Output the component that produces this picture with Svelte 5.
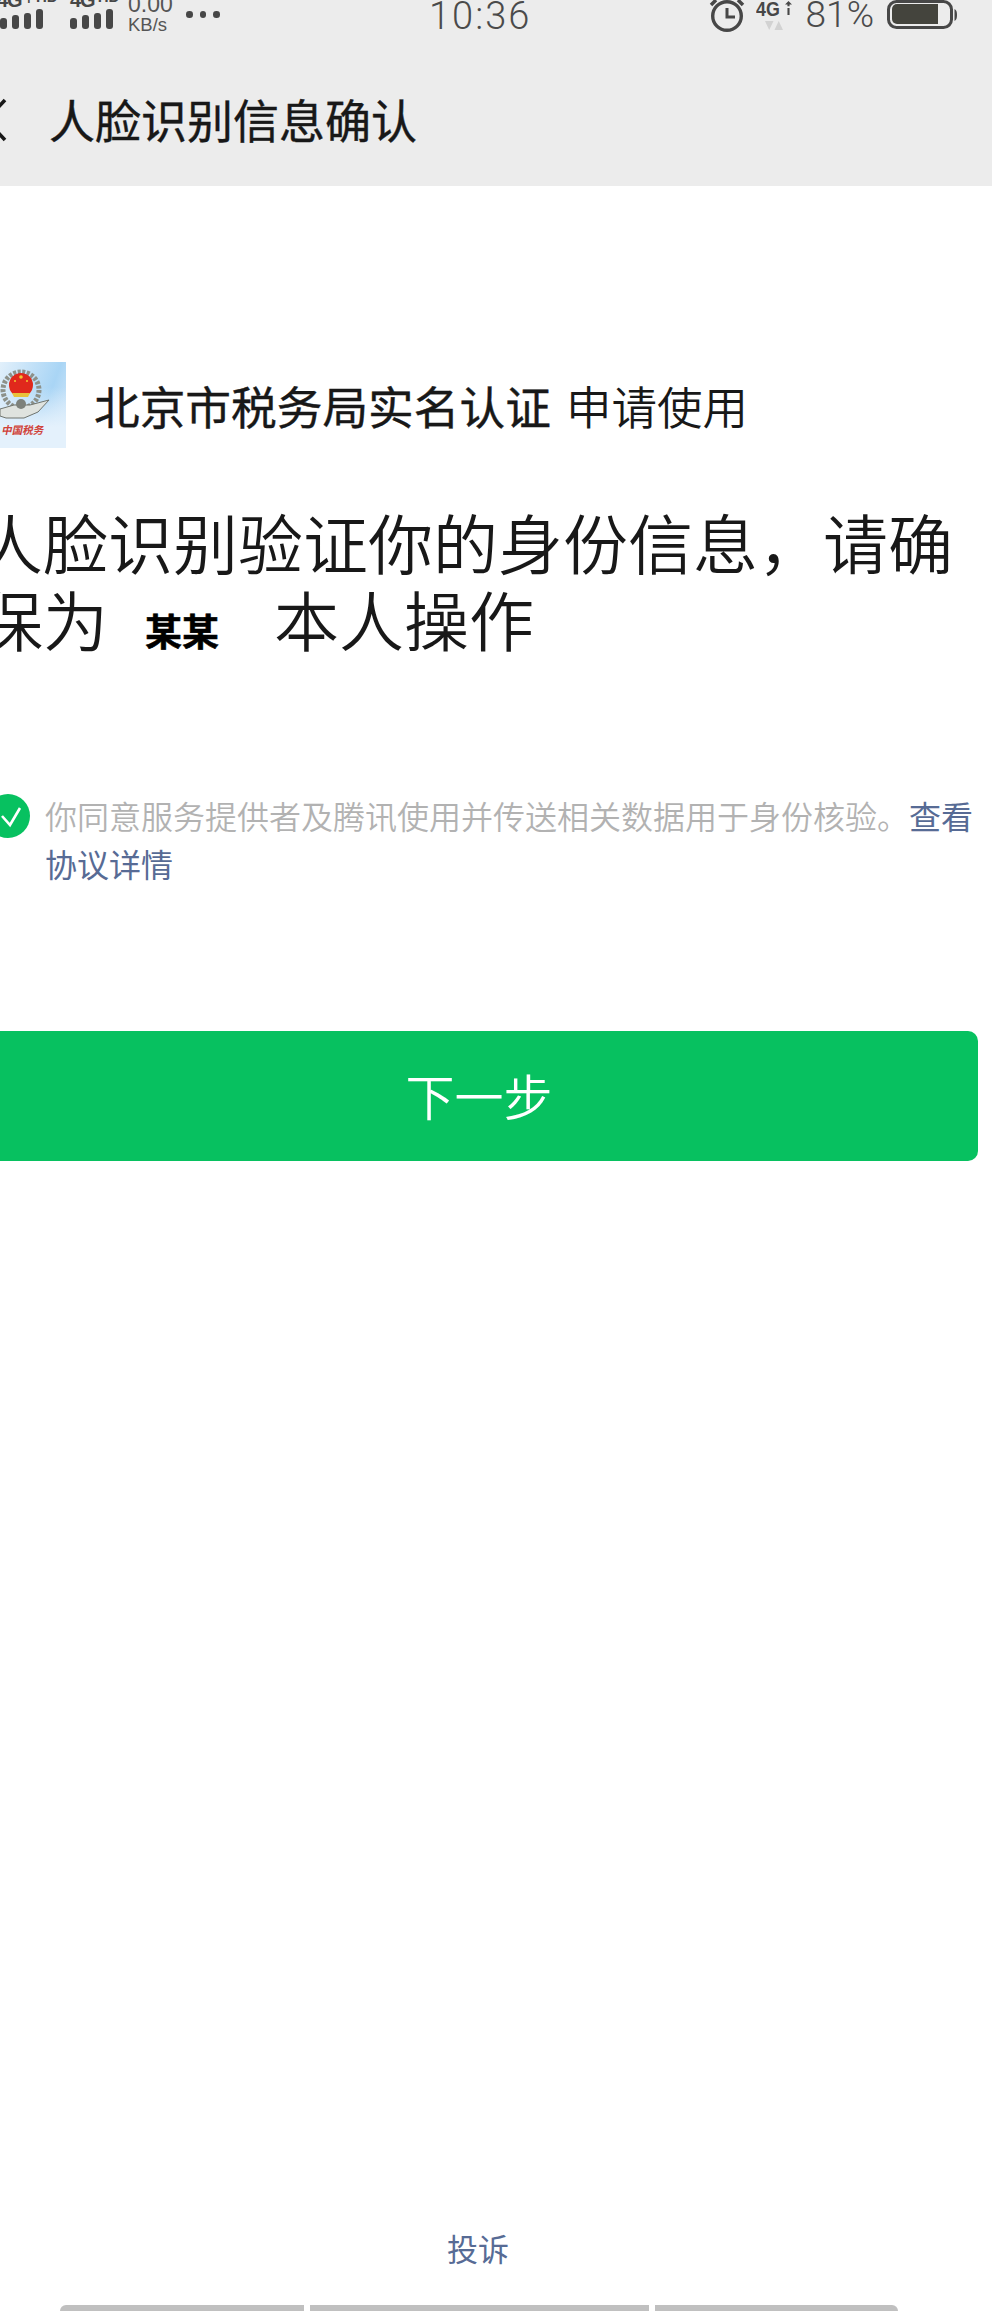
<script>
  const bars = [
    { h: 11 }, { h: 14 }, { h: 16 }, { h: 20 }
  ];
</script>

<div class="page">
  <header class="top">
    <div class="status">
      <div class="st-left">
        <div class="sig first">
          <span class="net"><span class="g">4G</span><span class="plus">+</span><span class="hd">HD</span></span>
          <div class="bars">{#each bars as b}<i style="height:{b.h}px"></i>{/each}</div>
        </div>
        <div class="sig second">
          <span class="net"><span class="g">4G</span><span class="hd">HD</span></span>
          <div class="bars">{#each bars as b}<i style="height:{b.h}px"></i>{/each}</div>
        </div>
        <div class="speed"><span class="sp-n">0.00</span><span class="sp-u">KB/s</span></div>
        <div class="more"><b></b><b></b><b></b></div>
      </div>
      <div class="time">10:36</div>
      <div class="st-right">
        <svg class="alarm" width="36" height="32" viewBox="0 0 36 32">
          <circle cx="18" cy="16" r="14.300" fill="none" stroke="#474747" stroke-width="3.4"/>
          <path d="M18 8v9h8" fill="none" stroke="#474747" stroke-width="3"/>
          <path d="M2 5 L7 0 M34 5 L29 0" stroke="#474747" stroke-width="3.500"/>
        </svg>
        <div class="net4">
          <div class="n4row">
            <span class="n4">4G</span>
            <svg width="8" height="16" viewBox="0 0 8 16"><path d="M4 0l4 4H5.200v2H2.800V4H0zM2.800 8h2.400v8H2.800z" fill="#474747"/></svg>
          </div>
          <svg class="tri" width="18" height="9" viewBox="0 0 18 9"><path d="M0 0h8.500L4.200 9zM9.500 9h8.500L13.700 0z" fill="#d2d2d2"/></svg>
        </div>
        <span class="pct">81%</span>
        <svg class="batt" width="72" height="30" viewBox="0 0 72 30">
          <rect x="1.500" y="1.500" width="63" height="26" rx="8" fill="none" stroke="#474747" stroke-width="3"/>
          <path d="M5 9a5 5 0 0 1 5-5h41v20H10a5 5 0 0 1-5-5z" fill="#44443d"/>
          <path d="M67.500 9c2 1 2.500 3 2.500 6s-.5 5-2.500 6z" fill="#474747"/>
        </svg>
      </div>
    </div>
    <div class="nav">
      <svg class="back" width="8" height="48" viewBox="0 0 8 48"><path d="M5 4 L-14 24 L5 44" fill="none" stroke="#181818" stroke-width="3.600"/></svg>
      <h1>人脸识别信息确认</h1>
    </div>
  </header>

  <main class="body">
    <div class="app">
      <div class="logo">
        <svg width="66" height="86" viewBox="0 0 66 86">
          <defs>
            <linearGradient id="bg" x1="0" y1="0" x2="1" y2="0.5">
              <stop offset="0" stop-color="#e2f0fb"/>
              <stop offset="0.75" stop-color="#a9d5f5"/>
              <stop offset="1" stop-color="#c6e2f8"/>
            </linearGradient>
            <linearGradient id="fade" x1="0" y1="0" x2="0" y2="1">
              <stop offset="0" stop-color="#e4f1fc" stop-opacity="0"/>
              <stop offset="1" stop-color="#e4f1fc"/>
            </linearGradient>
          </defs>
          <rect width="66" height="86" fill="url(#bg)"/>
          <rect y="25" width="66" height="40" fill="url(#fade)"/>
          <rect y="65" width="66" height="21" fill="#e4f1fc"/>
          <circle cx="21" cy="28" r="18" fill="none" stroke="#8d918a" stroke-width="5" stroke-dasharray="3 1.500"/>
          <circle cx="21" cy="23" r="12" fill="#e0281c"/>
          <circle cx="21" cy="15" r="1.800" fill="#f3c531"/>
          <circle cx="15" cy="19" r="1" fill="#f3c531"/><circle cx="27" cy="19" r="1" fill="#f3c531"/>
          <path d="M12 31h18l-2 4H14z" fill="#e8c13a"/>
          <path d="M0 47 L14 43 H30 L49 38 L38 50 L24 56 H6 L0 54z" fill="#dfe3df" stroke="#70756f" stroke-width="1"/>
          <circle cx="21" cy="42" r="5" fill="#7d817b"/>
        </svg>
        <span class="seal">中国税务</span>
      </div>
      <p class="name"><strong>北京市税务局实名认证</strong><span class="apply">申请使用</span></p>
    </div>

    <h2 class="head">人脸识别验证你的身份信息，请确<br/>保为<span class="who">某某</span>本人操作</h2>

    <div class="agree">
      <span class="check">
        <svg width="44" height="44" viewBox="0 0 44 44"><circle cx="22" cy="22" r="22" fill="#07c160"/><path d="M16 22l8 9 10-17" fill="none" stroke="#fff" stroke-width="2.600"/></svg>
      </span>
      <p>你同意服务提供者及腾讯使用并传送相关数据用于身份核验。<a href="#agree">查看协议详情</a></p>
    </div>

    <button class="next"><span>下一步</span></button>
  </main>

  <footer class="foot">
    <a href="#report">投诉</a>
    <div class="home"><i class="k1"></i><i class="k2"></i><i class="k3"></i></div>
  </footer>
</div>

<style>
  :global(body) { margin: 0; background: #fff; overflow: hidden; }
  .page {
    width: 992px; height: 2311px; overflow: hidden; display: flex; flex-direction: column;
    font-family: "Noto Sans CJK SC", "Liberation Sans", sans-serif; color: #181818; background: #fff;
  }
  .top { height: 186px; background: #ececec; flex: none; }
  .status { height: 40px; display: flex; justify-content: space-between; position: relative; color: #474747; overflow: hidden; }
  .st-left { display: flex; }
  .sig { width: 43px; display: flex; flex-direction: column; }
  .sig.second { margin-left: 27px; }
  .net { display: flex; height: 9px; align-items: flex-end; white-space: nowrap; font-family: "Liberation Sans", sans-serif; font-weight: 700; line-height: 1; }
  .g { font-size: 20px; letter-spacing: -1px; flex: none; margin-bottom: -1px; }
  .first .g { margin-left: -3px; }
  .hd { font-size: 15px; flex: none; margin: 0 0 5px 3px; }
  .plus { font-size: 14px; flex: none; margin: 0 0 3px 3px; }
  .bars { display: flex; align-items: flex-end; gap: 5.500px; height: 20px; }
  .bars i { width: 6.500px; background: #474747; border-radius: 3px; display: block; flex: none; }
  .speed { margin-left: 15px; width: 46px; display: flex; flex-direction: column; line-height: 1; font-family: "Liberation Sans", sans-serif; color: #555; }
  .sp-n { font-size: 23px; margin-top: -7px; height: 23px; }
  .sp-u { font-size: 18.500px; margin-top: 0; }
  .more { display: flex; gap: 7px; margin: 11px 0 0 12px; }
  .more b { width: 6.500px; height: 6.500px; border-radius: 50%; background: #474747; display: block; }
  .time { position: absolute; left: 429px; top: -4px; font: 300 38px/40px Roboto, sans-serif; letter-spacing: 2px; color: #4a4a4a; }
  .st-right { display: flex; align-items: flex-start; margin-right: 33px; }
  .alarm { overflow: visible; }
  .net4 { margin-left: 11px; width: 36px; display: flex; flex-direction: column; }
  .n4row { display: flex; height: 21px; gap: 3px; }
  .n4 { font: 700 21px/17px "Liberation Sans", sans-serif; width: 26px; transform: scaleX(.85); transform-origin: left; white-space: nowrap; }
  .tri { margin-left: 9px; display: block; }
  .pct { font: 300 37px/36px Roboto, sans-serif; margin-left: 14px; color: #4a4a4a; margin-top: -3px; }
  .batt { margin-left: 13px; }
  .nav { height: 146px; display: flex; align-items: center; padding-top: 12px; box-sizing: border-box; }
  .back { margin-top: 2px; flex: none; }
  h1 { margin: 0 0 0 41px; font-size: 46px; font-weight: 400; -webkit-text-stroke: .4px #181818; line-height: 1.2; color: #181818; }
  .body { margin-left: -22px; width: 1000px; flex: 1; }
  .app { display: flex; align-items: center; margin-top: 176px; padding-left: 22px; height: 86px; }
  .logo { position: relative; width: 66px; height: 86px; flex: none; }
  .logo svg { display: block; }
  .seal { position: absolute; left: 2px; top: 61px; font: 700 10.500px/14px "Noto Sans CJK SC", sans-serif; transform: skewX(-12deg); color: #d0433a; white-space: nowrap; }
  .name { margin: 0 0 0 28px; white-space: nowrap; line-height: 1.2; }
  .name strong { font-size: 45.700px; font-weight: 400; -webkit-text-stroke: .4px #181818; }
  .apply { font-size: 45.500px; font-weight: 350; margin-left: 15px; color: #181818; }
  .head { margin: 55px 0 0; font-size: 65px; font-weight: 350; line-height: 77px; color: #181818; white-space: nowrap; }
  .who { font-size: 37px; font-weight: 700; -webkit-text-stroke: .6px #000; color: #000; margin: 0 55px 0 37px; }
  .agree { display: flex; margin-top: 122px; align-items: flex-start; margin-left: 8px; }
  .check { width: 44px; height: 44px; flex: none; margin-top: 3px; margin-right: 15px; }
  .check svg { display: block; }
  .agree p { margin: 0; width: 940px; font-size: 32px; font-weight: 350; line-height: 48px; color: #b2b2b2; }
  .agree a { color: #576b95; text-decoration: none; font-weight: 400; }
  .next {
    display: block; width: 1000px; height: 130px; margin-top: 144px; border: 0; border-radius: 10px;
    background: #07c160; color: #fff; font: 350 49px/1 "Noto Sans CJK SC", sans-serif; padding: 0 0 4px 2px;
  }
  .foot { flex: none; display: flex; flex-direction: column; align-items: center; width: 956px; }
  .foot a { color: #576b95; text-decoration: none; font-size: 31px; line-height: 46px; margin-bottom: 34px; }
  .home { display: flex; gap: 6px; height: 6px; align-self: flex-start; margin-left: 60px; }
  .home i { display: block; background: #c0c0c0; height: 6px; }
  .k1 { width: 244px; border-radius: 6px 0 0 0; }
  .k2 { width: 339px; }
  .k3 { width: 243px; border-radius: 0 6px 0 0; }
</style>
